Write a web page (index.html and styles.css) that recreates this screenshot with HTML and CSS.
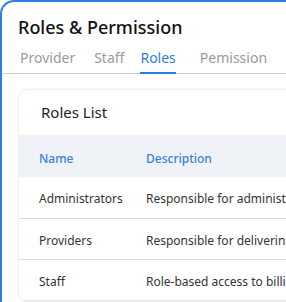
FILE: index.html
```html
<!DOCTYPE html>
<html lang="en">
<head>
    <meta charset="UTF-8">
    <title>Roles &amp; Permission</title>
    <link rel="stylesheet" href="styles.css">
</head>
<body>
    <div class="frame">
        <h1>Roles &amp; Permission</h1>
        <nav class="tabs">
            <span class="tab">Provider</span>
            <span class="tab">Staff</span>
            <span class="tab active">Roles</span>
            <span class="tab">Pemission</span>
        </nav>

        <div class="card">
            <div class="card-title">Roles List</div>
            <table class="roles">
                <thead>
                    <tr>
                        <th class="col-name">Name</th>
                        <th class="col-desc">Description</th>
                    </tr>
                </thead>
                <tbody>
                    <tr>
                        <td>Administrators</td>
                        <td>Responsible for administering the system</td>
                    </tr>
                    <tr>
                        <td>Providers</td>
                        <td>Responsible for delivering care to patients</td>
                    </tr>
                    <tr>
                        <td>Staff</td>
                        <td>Role-based access to billing and scheduling</td>
                    </tr>
                </tbody>
            </table>
        </div>
    </div>
</body>
</html>
```

FILE: styles.css
```css
* {
    margin: 0;
    padding: 0;
    box-sizing: border-box;
}

body {
    font-family: 'Noto Sans', 'Open Sans', sans-serif;
    background: #fff;
    width: 286px;
    height: 302px;
    overflow: hidden;
}

.frame {
    width: 320px;
    height: 340px;
    border-top: 2px solid #2f7de1;
    border-left: 2px solid #2f7de1;
    border-top-left-radius: 14px;
    padding-top: 12px;
}

h1 {
    font-size: 18px;
    font-weight: 500;
    color: #111;
    line-height: 26px;
    padding-left: 16px;
}

.tabs {
    display: flex;
    padding-left: 18px;
    margin-top: 8px;
    border-bottom: 1px solid #cfcfcf;
}

.tab {
    font-size: 14px;
    color: #9a9a9a;
    line-height: 19px;
    padding-bottom: 5px;
    border-bottom: 2px solid transparent;
    margin-bottom: -1px;
    margin-right: 19px;
}

.tab.active {
    color: #2f7de1;
    border-bottom-color: #2f7de1;
    margin-left: -3px;
    margin-right: 24px;
}

.card {
    width: 520px;
    margin: 16px 0 0 17px;
    background: #fff;
    border-radius: 8px;
    box-shadow: 0 0 3px rgba(0, 0, 0, 0.15);
    overflow: hidden;
}

.card-title {
    font-size: 15px;
    color: #222;
    line-height: 20px;
    padding: 12px 22px 13px;
}

.roles {
    border-collapse: collapse;
    table-layout: fixed;
    width: 100%;
    font-size: 12px;
    border-bottom: 1px solid #e6e6e6;
}

.roles th {
    background: #eff3f7;
    color: #3b80e3;
    font-weight: 500;
    text-align: left;
    height: 42px;
    padding: 4px 20px 0;
    white-space: nowrap;
}

.roles th.col-name {
    width: 107px;
}

.roles td {
    color: #333;
    height: 41px;
    padding: 3px 20px 0;
    border-top: 1px solid #dcdcdc;
    white-space: nowrap;
}

.roles tbody tr:first-child td {
    border-top: none;
}
```
